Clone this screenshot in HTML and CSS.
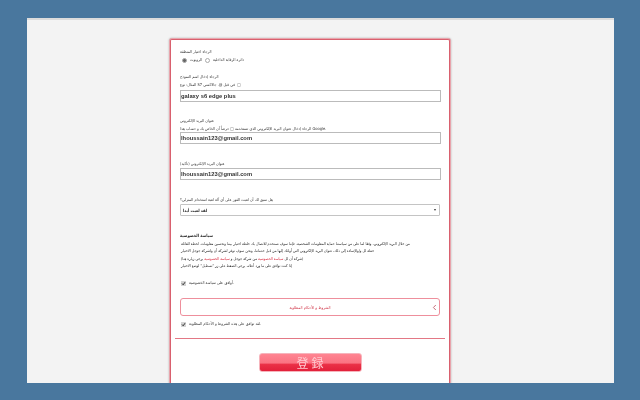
FILE: index.html
```html
<!DOCTYPE html>
<html lang="ar">
<head>
  <meta charset="UTF-8">
  <title>登録</title>
  <link rel="stylesheet" href="styles.css">
</head>
<body>
  <div class="panel">
    <form class="card" dir="ltr">
      <div class="field-region">
        <div class="label">الرجاء اختيار المنطقة</div>
        <div class="radio-row">
          <span class="radio checked"></span>
          <span class="hint">الروبوت</span>
          <span class="radio"></span>
          <span class="hint">دائرة الرقابة الداخلية</span>
        </div>
      </div>

      <div class="field-model">
        <div class="label">الرجاء إدخال اسم النموذج</div>
        <div class="hint">المثال: نوع S7 في قبل @. جالاكسي &nbsp;□</div>
        <div class="input">galaxy s6 edge plus</div>
      </div>

      <div class="field-email">
        <div class="label">عنوان البريد الإلكتروني</div>
        <div class="hint hint-tight">الرجاء إدخال عنوان البريد الإلكتروني الذي تستخدمه □ حرصاً أن الخاص بك و حساب هذا Google.</div>
        <div class="input">lhoussain123@gmail.com</div>
      </div>

      <div class="field-confirm">
        <div class="label">(عنوان البريد الإلكتروني (تأكيد</div>
        <div class="input">lhoussain123@gmail.com</div>
      </div>

      <div class="field-select">
        <div class="label">هل سبق لك أن لعبت الفوز على أي آلة لعبة استخدام المنزلي؟</div>
        <div class="select">
          <span class="select-text">لقد لعبت أبدا</span>
          <span class="select-arrow"></span>
        </div>
      </div>

      <div class="policy">
        <h3 class="policy-title">سياسة الخصوصية</h3>
        <p>من خلال البريد الإلكتروني، وفقا لما على من سياستنا حماية المعلومات الشخصية. فإننا سوف نستخدم للاتصال بك خلطة اختيار بيننا وتحسين معلومات. لخطة للعائلة</p>
        <p>خطة لل و/والإساءة إلى ذلك، عنوان البريد الإلكتروني التي أولئك إليها من قبل خدماتنا، ونحن سوف توفر لشركة أن ولشركة جوجل الاختيار</p>
        <p>(شركة أن لل <span class="red">سياسة الخصوصية</span> من شركة جوجل و <span class="red">سياسة الخصوصية</span> يرجى زيارة هنا)</p>
        <p>إذا كنت توافق على ما ورد أعلاه، يرجى الضغط على زر "تسطيل" لوضع الاختيار</p>
      </div>

      <label class="check-row check-policy">
        <svg class="check" width="5" height="5" viewBox="0 0 5 5"><rect width="5" height="5" fill="#d4d4d4"/><path d="M1 2.5L2.2 3.8L4 1.2" fill="none" stroke="#333" stroke-width="1"/></svg>
        <span class="hint">أوافق على سياسة الخصوصية.</span>
      </label>

      <div class="terms">
        <span class="terms-text">الشروط و الأحكام المطلوبة</span>
        <svg class="chevron" width="5" height="7" viewBox="0 0 5 7"><path d="M3.8 1L1.4 3.5L3.8 6" fill="none" stroke="#c9707c" stroke-width="1"/></svg>
      </div>

      <label class="check-row check-terms">
        <svg class="check" width="5" height="5" viewBox="0 0 5 5"><rect width="5" height="5" fill="#d4d4d4"/><path d="M1 2.5L2.2 3.8L4 1.2" fill="none" stroke="#333" stroke-width="1"/></svg>
        <span class="hint">لقد توافق على هذه الشروط و الأحكام المطلوبة.</span>
      </label>

      <hr class="divider">

      <div class="submit-row">
        <button type="button" class="submit">登録</button>
      </div>
    </form>
  </div>
</body>
</html>
```

FILE: styles.css
```css
html, body {
  height: 100%;
}

body {
  margin: 0;
  overflow: hidden;
  background-color: #49779e;
  font-family: "DejaVu Sans Condensed", "DejaVu Sans", sans-serif;
  color: #333;
}

.panel {
  box-sizing: border-box;
  width: 587px;
  height: 365px;
  margin: 18px 0 0 27px;
  padding: 19px 0 0 143px;
  overflow: hidden;
  background-color: #f3f3f3;
  border-top: 2px solid #dcdcdc;
}

/* the reference is a scaled down capture, everything in it is a bit soft */
.card {
  box-sizing: border-box;
  width: 280px;
  padding: 8px 9px 40px 9px;
  background-color: #fff;
  border: 1px solid #d9606e;
  border-bottom: none;
  border-radius: 2px 2px 0 0;
  box-shadow: 0 0 0 1px #e8a4ac, 0 0 2px 1px #aaa;
  filter: blur(0.3px);
}

.label,
.hint {
  font-size: 4px;
  line-height: 8px;
  color: #333;
  white-space: nowrap;
}

.hint-tight {
  line-height: 7px;
}

.field-model {
  margin-top: 9px;
}

.field-email {
  margin-top: 15px;
}

.field-confirm,
.field-select {
  margin-top: 16px;
}

.radio-row {
  display: flex;
  align-items: center;
  gap: 3px;
  margin-left: 2px;
}

.radio {
  box-sizing: border-box;
  width: 5px;
  height: 5px;
  border: 1px solid #aaa;
  border-radius: 50%;
  background-color: #fff;
}

.radio.checked {
  background-color: #666;
}

.input {
  box-sizing: border-box;
  width: 261px;
  height: 12px;
  margin-top: 1px;
  font-family: "Liberation Sans", sans-serif;
  font-size: 5.8px;
  font-weight: bold;
  line-height: 10px;
  color: #333;
  border: 1px solid #bbb;
}

.field-email .input,
.field-confirm .input {
  margin-top: 0;
}

.select {
  box-sizing: border-box;
  display: flex;
  align-items: center;
  justify-content: space-between;
  width: 260px;
  height: 12px;
  padding: 0 3px 0 2px;
  border: 1px solid #c4c4c4;
  border-radius: 1px;
}

.select-text {
  font-size: 4.2px;
  font-weight: bold;
  color: #222;
}

.select-arrow {
  width: 0;
  height: 0;
  border-left: 1.5px solid transparent;
  border-right: 1.5px solid transparent;
  border-top: 2px solid #333;
}

.policy {
  margin-top: 16px;
}

.policy-title {
  margin: 0;
  font-size: 4.2px;
  line-height: 8px;
  font-weight: bold;
  color: #222;
}

.policy p {
  margin: 0 0 0 1px;
  font-size: 3.8px;
  line-height: 7.3px;
  color: #222;
  white-space: nowrap;
}

.red {
  color: #d8253a;
}

.check-row {
  display: flex;
  align-items: center;
  gap: 3px;
  margin-left: 1px;
}

.check-policy {
  margin-top: 10px;
}

.check-terms {
  margin-top: 4px;
}

.terms {
  box-sizing: border-box;
  display: flex;
  align-items: center;
  justify-content: center;
  position: relative;
  width: 260px;
  height: 18px;
  margin-top: 11px;
  border: 1px solid #ee8f9c;
  border-radius: 3px;
}

.terms-text {
  font-size: 4px;
  color: #cf3245;
}

.chevron {
  position: absolute;
  right: 2px;
  top: 5px;
}

.divider {
  width: 270px;
  height: 1px;
  margin: 10px 0 0 -5px;
  border: none;
  background-color: #e37885;
}

.submit-row {
  display: flex;
  justify-content: center;
  margin-top: 14px;
}

.submit {
  width: 103px;
  height: 19px;
  padding: 0;
  font-family: "Noto Sans CJK JP", sans-serif;
  font-size: 12px;
  line-height: 17px;
  letter-spacing: 3px;
  text-indent: 3px;
  color: #ffc9cf;
  background: linear-gradient(#ff8592 0%, #fa7382 52%, #ea3046 62%, #e2203a 100%);
  border: 1px solid #f6b4bc;
  border-radius: 3px;
}
```
